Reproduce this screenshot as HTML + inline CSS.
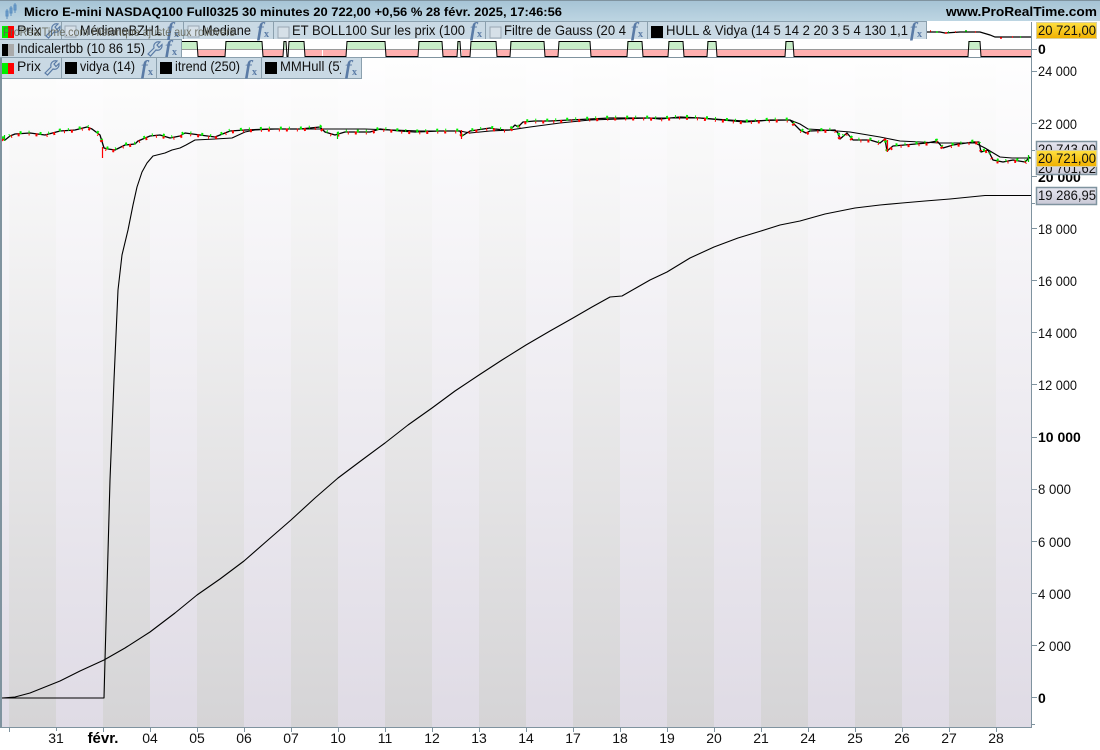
<!DOCTYPE html>
<html><head><meta charset="utf-8"><style>
html,body{margin:0;padding:0;width:1100px;height:750px;overflow:hidden;background:#fff}
svg{position:absolute;left:0;top:0;font-family:"Liberation Sans",sans-serif}
</style></head><body>
<svg width="1100" height="750" viewBox="0 0 1100 750" font-size="14">
<defs>
<linearGradient id="ga" x1="0" y1="0" x2="0" y2="1"><stop offset="0" stop-color="#fff"/><stop offset="1" stop-color="#d5d4d6"/></linearGradient>
<linearGradient id="lv" x1="0" y1="0" x2="0" y2="1"><stop offset="0" stop-color="#fff"/><stop offset="1" stop-color="#dfdbe5"/></linearGradient>
<linearGradient id="tb" x1="0" y1="0" x2="0" y2="1"><stop offset="0" stop-color="#a5c3d5"/><stop offset="1" stop-color="#bdd5e2"/></linearGradient>
<linearGradient id="gold" x1="0" y1="0" x2="0" y2="1"><stop offset="0" stop-color="#ffe040"/><stop offset="1" stop-color="#f0b000"/></linearGradient>
<linearGradient id="tag" x1="0" y1="0" x2="0" y2="1"><stop offset="0" stop-color="#e6e6f0"/><stop offset="1" stop-color="#c9c9d6"/></linearGradient>
<clipPath id="mm"><rect x="278" y="58" width="63" height="20"/></clipPath>
<g id="fx"><text x="0" y="0" font-family="Liberation Serif,serif" font-style="italic" font-weight="bold" font-size="20" fill="#5a7ba6">f</text><text x="7" y="1" font-family="Liberation Serif,serif" font-weight="bold" font-size="10" fill="#5a7ba6">x</text></g>
<g id="wr"><path d="M1 13 L7 7 C6 3 9 0 13 1 L10 4 L12 6.500 L15 3.500 C15.500 8 12 10 9 9 L3.500 15 Z" fill="none" stroke="#5a7ba6" stroke-width="1.200"/></g>
</defs>

<!-- plot background -->
<rect x="2" y="39" width="1029" height="688" fill="url(#lv)"/>
<g fill="url(#ga)">
<rect x="9" y="39" width="47" height="688"/><rect x="103" y="39" width="47" height="688"/><rect x="197" y="39" width="47" height="688"/><rect x="291" y="39" width="47" height="688"/><rect x="385" y="39" width="47" height="688"/><rect x="479" y="39" width="47" height="688"/><rect x="573" y="39" width="47" height="688"/><rect x="667" y="39" width="47" height="688"/><rect x="761" y="39" width="47" height="688"/><rect x="855" y="39" width="47" height="688"/><rect x="949" y="39" width="47" height="688"/>
</g>

<!-- chart lines -->
<g stroke-linejoin="round">
<polyline fill="none" stroke="#000" stroke-width="1.100" points="2,698 15,697 30,693 45,687 60,681 80,671 104,660 125,648 150,632 175,613 197,595 220,579 244,561 268,540 291,520 315,498 338,478 362,460 385,443 408,425 432,408 455,391 479,375 502,360 526,345 550,331 573,318 592,307 610,297 622,296 636,288 650,280 667,272 690,258 714,247 738,238 761,231 780,225 800,221 825,214 855,208 880,205 902,203 925,201 950,199 970,197 985,195.500 1031,195.500"/>
<polyline fill="none" stroke="#000" stroke-width="1.100" points="2,698 104,698 105,660 110,480 114,380 118,290 122,255 128,230 133,205 137,187 142,172 147,163 153,156 165,153 172,150 180,148 186,145 195,140 215,139 232,138 245,132 255,130 275,129 330,129 365,129 420,131 460,131 470,133 490,131 510,130 530,127 560,123 590,120 620,119 650,118 700,118 745,121 790,120 800,124 808,129 825,130 850,132 880,137 900,141 940,143 975,143 985,148 1000,157 1012,158 1031,158"/>
<g fill="none">
<polyline stroke="#000" stroke-width="1.300" points="2,138 5,140 10,136 15,134 30,133 45,135 60,131 75,130 87,127 92,129 100,135 104,148 108,149 115,150 125,145 135,144 138,141 150,136 160,135 170,138 180,136 185,133 200,135 215,137 230,131 245,130 270,129 300,129 320,127 325,132 335,135 345,132 370,132 380,129 400,131 415,132 440,131 460,131 462,136 470,131 490,128 495,129 505,130 510,130 515,125 518,127 523,122 535,121 550,121 570,120 590,119 610,118 650,118 660,119 680,117 700,118 745,122 770,120 790,120 792,122 800,130 806,133 810,131 835,130 838,133 840,139 847,133 853,140 870,140 880,143 885,139 887,151 893,146 927,143 937,141 943,148 953,145 973,142 979,142 981,152 988,150 993,160 1003,162 1013,160 1025,162 1030,157"/>
<polyline stroke="#f00" stroke-width="3" stroke-dasharray="2 9 1 6" points="2,139 5,141 10,137 15,135 30,134 45,136 60,132 75,131 87,128 92,130 100,136 104,149 108,150 115,151 125,146 135,145 138,142 150,137 160,136 170,139 180,137 185,134 200,136 215,138 230,132 245,131 270,130 300,130 320,128 325,133 335,136 345,133 370,133 380,130 400,132 415,133 440,132 460,132 462,137 470,132 490,129 495,130 505,131 510,131 515,126 518,128 523,123 535,122 550,122 570,121 590,120 610,119 650,119 660,120 680,118 700,119 745,123 770,121 790,121 792,123 800,131 806,134 810,132 835,131 838,134 840,140 847,134 853,141 870,141 880,144 885,140 887,152 893,147 927,144 937,142 943,149 953,146 973,143 979,143 981,153 988,151 993,161 1003,163 1013,161 1025,163 1030,158"/>
<polyline stroke="#0e0" stroke-width="2.800" stroke-dasharray="2 7 1 10" points="2,137 5,139 10,135 15,133 30,132 45,134 60,130 75,129 87,126 92,128 100,134 104,147 108,148 115,149 125,144 135,143 138,140 150,135 160,134 170,137 180,135 185,132 200,134 215,136 230,130 245,129 270,128 300,128 320,126 325,131 335,134 345,131 370,131 380,128 400,130 415,131 440,130 460,130 462,135 470,130 490,127 495,128 505,129 510,129 515,124 518,126 523,121 535,120 550,120 570,119 590,118 610,117 650,117 660,118 680,116 700,117 745,121 770,119 790,119 792,121 800,129 806,132 810,130 835,129 838,132 840,138 847,132 853,139 870,139 880,142 885,138 887,150 893,145 927,142 937,140 943,147 953,144 973,141 979,141 981,151 988,149 993,159 1003,161 1013,159 1025,161 1030,156"/>
</g>
</g>
<path d="M102.500 147V158M461.500 130V139M887.500 140V152" stroke="#f00" stroke-width="1.200"/>
<path d="M1028.500 155V162M4.500 135V141M337.500 132V139" stroke="#0c0" stroke-width="1.200"/>

<!-- indicator strip -->
<rect x="2" y="39" width="1029" height="19" fill="#fff"/>
<g fill="#c8eec8">
<rect x="182" y="41" width="15" height="8"/><rect x="225" y="41" width="37" height="8"/><rect x="283" y="41" width="3" height="8"/><rect x="289" y="41" width="15" height="8"/><rect x="347" y="41" width="38" height="8"/><rect x="418" y="41" width="24" height="8"/><rect x="457" y="41" width="3" height="8"/><rect x="471" y="41" width="25" height="8"/><rect x="510" y="41" width="34" height="8"/><rect x="559" y="41" width="31" height="8"/><rect x="627" y="41" width="15" height="8"/><rect x="668" y="41" width="15" height="8"/><rect x="707" y="41" width="9" height="8"/><rect x="785" y="41" width="8" height="8"/><rect x="968" y="41" width="12" height="8"/>
</g>
<g fill="#ffb0b0">
<rect x="198" y="49" width="27" height="8"/><rect x="263" y="49" width="20" height="8"/><rect x="305" y="49" width="17" height="8"/><rect x="323" y="49" width="23" height="8"/><rect x="386" y="49" width="32" height="8"/><rect x="443" y="49" width="14" height="8"/><rect x="462" y="49" width="8" height="8"/><rect x="497" y="49" width="13" height="8"/><rect x="545" y="49" width="13" height="8"/><rect x="591" y="49" width="36" height="8"/><rect x="643" y="49" width="25" height="8"/><rect x="684" y="49" width="23" height="8"/><rect x="717" y="49" width="68" height="8"/><rect x="794" y="49" width="174" height="8"/><rect x="981" y="49" width="50" height="8"/>
</g>
<rect x="2" y="49" width="1029" height="1" fill="#9a9a9a"/>
<path d="M182 41.500H197L198 56.500H225L226 41.500H262L263 56.500H283L284 41.500H286L287 56.500H288L289 41.500H304L305 56.500H346L347 41.500H385L386 56.500H418L419 41.500H442L443 56.500H457L458 41.500H460L461 56.500H470L471 41.500H496L497 56.500H510L511 41.500H544L545 56.500H558L559 41.500H590L591 56.500H627L628 41.500H642L643 56.500H668L669 41.500H683L684 56.500H707L708 41.500H716L717 56.500H785L786 41.500H793L794 56.500H968L969 41.500H980L981 56.500H1031" fill="none" stroke="#000" stroke-width="1"/>
<rect x="0" y="57" width="1031" height="1" fill="#7f939f"/>

<!-- title bar -->
<rect x="0" y="0" width="1100" height="21" fill="url(#tb)"/>
<rect x="0" y="0" width="1100" height="1" fill="#7f939f"/>
<g stroke="#5b8fc0" stroke-width="1" fill="#6f9fcb"><path d="M7 9V19M11 6V16M15 3V13" fill="none"/><rect x="6" y="11" width="2" height="5"/><rect x="10" y="8" width="2" height="5"/><rect x="14" y="5" width="2" height="5"/></g>
<text x="24" y="16" font-weight="bold" font-size="12" fill="#000" textLength="538" lengthAdjust="spacingAndGlyphs">Micro E-mini NASDAQ100 Full0325 30 minutes 20 722,00 +0,56 % 28 févr. 2025, 17:46:56</text>
<text x="946" y="16" font-weight="bold" font-size="13" fill="#000" textLength="151" lengthAdjust="spacingAndGlyphs">www.ProRealTime.com</text>

<!-- legend row 1 -->
<rect x="0" y="21" width="927" height="18" fill="#c9d9e4"/>
<path d="M0 21.500H927M0 39.500H181M61.500 21V39M183.500 21V39M273.500 21V39M485.500 21V39M647.500 21V39M926.500 21V39" stroke="#8ba0ae" stroke-width="1" fill="none"/>
<rect x="2" y="26" width="6" height="12" fill="#0e0"/><rect x="8" y="26" width="6" height="12" fill="#f00"/>
<text x="17" y="35" font-size="14" textLength="24" lengthAdjust="spacingAndGlyphs" fill="#111">Prix</text>
<use href="#wr" x="45" y="23"/>
<rect x="65" y="26" width="11" height="11" fill="#d6e0e8" stroke="#9aa8b3"/>
<text x="80" y="35" font-size="14" textLength="81" lengthAdjust="spacingAndGlyphs" fill="#111">MédianeBZH1</text>
<use href="#fx" x="167" y="36"/>
<rect x="188" y="26" width="11" height="11" fill="#d6e0e8" stroke="#9aa8b3"/>
<text x="202" y="35" font-size="14" textLength="49" lengthAdjust="spacingAndGlyphs" fill="#111">Mediane</text>
<use href="#fx" x="257" y="36"/>
<rect x="278" y="27" width="11" height="11" fill="#d6e0e8" stroke="#9aa8b3"/>
<text x="292" y="35" font-size="14" textLength="173" lengthAdjust="spacingAndGlyphs" fill="#111">ET BOLL100 Sur les prix (100</text>
<use href="#fx" x="470" y="36"/>
<rect x="490" y="27" width="11" height="11" fill="#d6e0e8" stroke="#9aa8b3"/>
<text x="504" y="35" font-size="14" textLength="122" lengthAdjust="spacingAndGlyphs" fill="#111">Filtre de Gauss (20 4</text>
<use href="#fx" x="631" y="36"/>
<rect x="651" y="26" width="12" height="12" fill="#000"/>
<text x="666" y="35" font-size="14" textLength="242" lengthAdjust="spacingAndGlyphs" fill="#111">HULL &amp; Vidya (14 5 14 2 20 3 5 4 130 1,1</text>
<use href="#fx" x="910" y="36"/>
<text x="3" y="36" font-size="12" fill="#5f5f50" fill-opacity=".85" textLength="232" lengthAdjust="spacingAndGlyphs">ProRealTime.com Historique ajusté aux rollovers</text>

<!-- legend row 2 -->
<rect x="0" y="40" width="181" height="17" fill="#c9d9e4"/>
<path d="M181.500 39V58" stroke="#8ba0ae"/>
<rect x="2" y="44" width="6" height="12" fill="#000"/><rect x="8" y="44" width="6" height="12" fill="#aaa"/>
<text x="17" y="53" font-size="14" textLength="128" lengthAdjust="spacingAndGlyphs" fill="#111">Indicalertbb (10 86 15)</text>
<use href="#wr" x="147" y="41"/>
<use href="#fx" x="165" y="54"/>

<!-- legend row 3 -->
<rect x="0" y="58" width="361" height="20" fill="#c9d9e4"/>
<path d="M0 57.500H361M0 78.500H361.500V58M61.500 58V78M156.500 58V78M261.500 58V78" stroke="#8ba0ae" fill="none"/>
<rect x="2" y="63" width="6" height="11" fill="#0e0"/><rect x="8" y="63" width="6" height="11" fill="#f00"/>
<text x="17" y="71" font-size="14" textLength="24" lengthAdjust="spacingAndGlyphs" fill="#111">Prix</text>
<use href="#wr" x="44" y="60"/>
<rect x="65" y="62" width="12" height="12" fill="#000"/>
<text x="80" y="71" font-size="14" textLength="55" lengthAdjust="spacingAndGlyphs" fill="#111">vidya (14)</text>
<use href="#fx" x="141" y="74"/>
<rect x="160" y="62" width="12" height="12" fill="#000"/>
<text x="175" y="71" font-size="14" textLength="65" lengthAdjust="spacingAndGlyphs" fill="#111">itrend (250)</text>
<use href="#fx" x="245" y="74"/>
<rect x="265" y="62" width="12" height="12" fill="#000"/>
<g clip-path="url(#mm)"><text x="280" y="71" font-size="14" textLength="64" lengthAdjust="spacingAndGlyphs" fill="#111">MMHull (5)</text></g>
<use href="#fx" x="345" y="74"/>

<!-- mini chart -->
<rect x="927" y="22" width="104" height="17" fill="#fff"/>
<polyline fill="none" stroke="#000" stroke-width="1.200" points="927,32 940,32 945,33 960,32 980,32 990,35 995,37 1031,37"/>
<path d="M930 31h1M945 33h2M955 32h1M975 32h1M1000 38h2M1012 37h1" stroke="#f00" stroke-width="1.500"/>
<path d="M936 32h2M948 32h1M965 31h2M1020 37h1" stroke="#0c0" stroke-width="1.500"/>

<!-- axes -->
<rect x="0" y="58" width="2" height="670" fill="#7f939f"/>
<rect x="1031" y="22" width="1" height="706" fill="#7f939f"/>
<rect x="0" y="727" width="1032" height="1" fill="#7f939f"/>
<path d="M1032 49.500h5M1032 71.500h5M1032 123.500h5M1032 176.500h5M1032 228.500h5M1032 280.500h5M1032 332.500h5M1032 384.500h5M1032 437.500h5M1032 489.500h5M1032 541.500h5M1032 593.500h5M1032 645.500h5M1032 697.500h5M1032 724.500h3M1032 203.500h3M1032 150.500h3" stroke="#7f939f" fill="none"/>
<path d="M9.500 728v4M56.500 728v3M103.500 728v4M150.500 728v4M197.500 728v4M244.500 728v4M291.500 728v4M338.500 728v4M385.500 728v4M432.500 728v4M479.500 728v4M526.500 728v4M573.500 728v4M620.500 728v4M667.500 728v4M714.500 728v4M761.500 728v4M808.500 728v4M855.500 728v4M902.500 728v4M949.500 728v4M996.500 728v4" stroke="#7f939f" fill="none"/>

<g font-size="14" fill="#111" lengthAdjust="spacingAndGlyphs">
<text x="1038" y="54" font-weight="bold" fill="#000">0</text>
<text x="1038" y="76" textLength="39" lengthAdjust="spacingAndGlyphs">24 000</text>
<text x="1038" y="129" textLength="39" lengthAdjust="spacingAndGlyphs">22 000</text>
<text x="1038" y="182" font-weight="bold" fill="#000">20 000</text>
<text x="1038" y="234" textLength="39" lengthAdjust="spacingAndGlyphs">18 000</text>
<text x="1038" y="286" textLength="39" lengthAdjust="spacingAndGlyphs">16 000</text>
<text x="1038" y="338" textLength="39" lengthAdjust="spacingAndGlyphs">14 000</text>
<text x="1038" y="390" textLength="39" lengthAdjust="spacingAndGlyphs">12 000</text>
<text x="1038" y="442" font-weight="bold" fill="#000">10 000</text>
<text x="1038" y="494" textLength="33" lengthAdjust="spacingAndGlyphs">8 000</text>
<text x="1038" y="547" textLength="33" lengthAdjust="spacingAndGlyphs">6 000</text>
<text x="1038" y="599" textLength="33" lengthAdjust="spacingAndGlyphs">4 000</text>
<text x="1038" y="651" textLength="33" lengthAdjust="spacingAndGlyphs">2 000</text>
<text x="1038" y="703" font-weight="bold" fill="#000">0</text>
</g>
<g font-size="14" fill="#111" text-anchor="middle">
<text x="56" y="743">31</text><text x="103" y="743" font-weight="bold" font-size="15" fill="#000">févr.</text><text x="150" y="743">04</text><text x="197" y="743">05</text><text x="244" y="743">06</text><text x="291" y="743">07</text><text x="338" y="743">10</text><text x="385" y="743">11</text><text x="432" y="743">12</text><text x="479" y="743">13</text><text x="526" y="743">14</text><text x="573" y="743">17</text><text x="620" y="743">18</text><text x="667" y="743">19</text><text x="714" y="743">20</text><text x="761" y="743">21</text><text x="808" y="743">24</text><text x="855" y="743">25</text><text x="902" y="743">26</text><text x="949" y="743">27</text><text x="996" y="743">28</text>
</g>

<!-- price tags -->
<rect x="1036.500" y="141.500" width="60" height="16" fill="url(#tag)" stroke="#7f939f" stroke-width="1.500"/>
<text x="1038" y="154" font-size="14" fill="#111" textLength="58" lengthAdjust="spacingAndGlyphs">20 743,00</text>
<rect x="1036.500" y="158.500" width="60" height="16" fill="url(#tag)" stroke="#7f939f" stroke-width="1.500"/>
<text x="1038" y="173" font-size="14" fill="#111" textLength="58" lengthAdjust="spacingAndGlyphs">20 701,62</text>
<rect x="1036.500" y="150.500" width="60" height="16" fill="url(#gold)" stroke="#d9d0a0"/>
<text x="1038" y="163" font-size="14" fill="#111" textLength="58" lengthAdjust="spacingAndGlyphs">20 721,00</text>
<rect x="1036.500" y="187.500" width="60" height="17" fill="url(#tag)" stroke="#7f939f" stroke-width="1.500"/>
<text x="1038" y="200" font-size="14" fill="#111" textLength="58" lengthAdjust="spacingAndGlyphs">19 286,95</text>
<rect x="1036.500" y="22.500" width="60" height="16" fill="url(#gold)" stroke="#d9d0a0"/>
<text x="1038" y="35" font-size="14" fill="#111" textLength="58" lengthAdjust="spacingAndGlyphs">20 721,00</text>
</svg>
</body></html>
